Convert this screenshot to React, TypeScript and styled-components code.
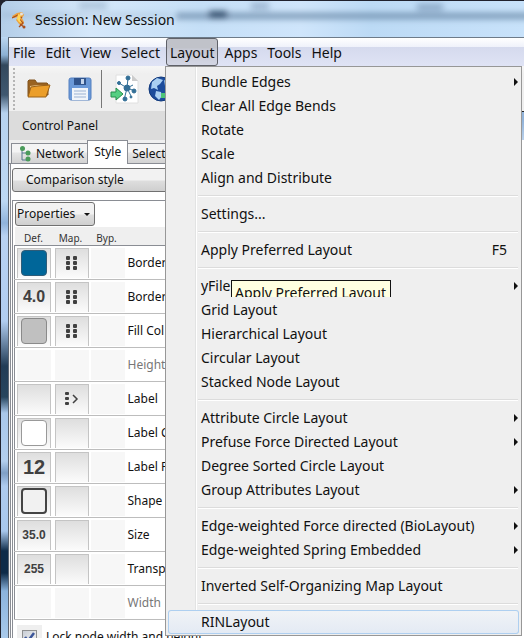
import React from "react";
import styled, { createGlobalStyle, css } from "styled-components";

const Global = createGlobalStyle`
  * { box-sizing: border-box; }
  html, body { margin: 0; padding: 0; overflow: hidden; background: #23242e; }
  body, button, input { font-family: "Noto Sans", "Open Sans", sans-serif; color: #111; }
  button { margin: 0; padding: 0; border: 0; background: none; white-space: nowrap; }
`;

const Frame = styled.div`
  height: 100vh;
  display: flex;
  flex-direction: column;
  overflow: hidden;
  padding-left: 7px;
  border-top: 1px solid #20222e;
  border-left: 1px solid #20222e;
  border-top-left-radius: 8px;
  background:
    linear-gradient(#c8e0f700 0 37px, #b9d4ee 37px, #8cb0d4 54px, #33485d 64px, #405870 94px, #b7d2ef 112px, #bdd8f3 200px, #90b3db 222px, #b9d2f2 235px, #b1cdf0 320px, #223c56 365px, #27455e 396px, #a9c7ea 412px, #b3cfee 460px, #7f9fc5 472px, #aecbee 485px, #a8c7ec 530px, #0f2b48 550px, #0f2b48 572px, #8bb3dc 590px, #a9caeb 638px) left / 7px 100% no-repeat,
    #bad7f3;
`;

const TitleBar = styled.header`
  position: relative;
  flex: 0 0 36px;
  display: flex;
  align-items: center;
  gap: 9px;
  margin-left: -7px;
  padding: 2px 0 0 11px;
  background: linear-gradient(90deg, #b4cee8 0, #d5e8fa 90px, #c5dff7 200px, #cfe5fb 300px, #bcdaf5 370px, #c8e2fa 100%);
`;

const TitleBlur = styled.svg`
  position: absolute;
  inset: 0;
  width: 100%;
  height: 100%;
`;

const Title = styled.h1`
  position: relative;
  margin: 0;
  font-size: 14px;
  line-height: 20px;
  font-weight: 400;
`;

const AppIcon = styled.svg`
  position: relative;
`;

const Client = styled.main`
  flex: 1;
  min-height: 0;
  display: flex;
  flex-direction: column;
  border-left: 1px solid #59626f;
  border-top: 1px solid #6d7b89;
  background: #efefef;
`;

const MenuBar = styled.nav`
  flex: 0 0 28px;
  display: flex;
  align-items: flex-start;
  gap: 2px;
  background: linear-gradient(#ffffff 0, #eff2fa 9px, #d5daed 9px, #dfe3f5 100%);
`;

const MenuSlot = styled.div`
  position: relative;
`;

const MenuTitle = styled.button<{ $open?: boolean }>`
  height: 28px;
  padding: 2px 3px 0;
  font-size: 14px;
  line-height: 24px;
  border: 1px solid transparent;
  border-radius: 3px;
  ${(p) =>
    p.$open &&
    css`
      border-color: #5f6168;
      background: linear-gradient(#c0c2c9 0 9px, #c6c8d3 10px, #d3d6e4);
    `}
`;

const Popup = styled.div`
  position: absolute;
  z-index: 5;
  top: 28px;
  left: -1px;
  min-width: 357px;
  padding: 3px 2px 1px;
  border: 1px solid #979797;
  background: linear-gradient(90deg, transparent 29px, #e2e3e3 29px 30px, #fff 30px 31px, transparent 31px), #efefef;
`;

const Item = styled.div<{ $active?: boolean }>`
  position: relative;
  height: 24px;
  border-radius: 3px;
  ${(p) =>
    p.$active &&
    css`
      box-shadow: inset 0 0 0 1px #aecff0;
      background: linear-gradient(#f1f3f6, #e3eaf4);
    `}
`;

const ItemButton = styled.button`
  width: 100%;
  height: 24px;
  display: flex;
  align-items: center;
  justify-content: space-between;
  padding: 0 1px 0 33px;
  font-size: 14px;
  line-height: 24px;
  text-align: left;
`;

const Shortcut = styled.span`
  padding-right: 11px;
`;

const Separator = styled.hr`
  height: 12px;
  margin: 0 1px 0 30px;
  border: 0;
  background: linear-gradient(transparent 5px, #dcdcdc 5px 6px, #fff 6px 7px, transparent 7px);
`;

const Tip = styled.div`
  position: absolute;
  top: 6px;
  left: 63px;
  width: 160px;
  height: 17px;
  overflow: hidden;
  padding-left: 3px;
  border: 1px solid #111;
  border-bottom: 0;
  background: #ffffe1;
  font-size: 14px;
  line-height: 24px;
  white-space: nowrap;
`;

const ToolBar = styled.div`
  flex: 0 0 45px;
  display: flex;
  align-items: center;
  padding-left: 4px;
  background: linear-gradient(#f6f6f6, #efefef 8px);
`;

const Grip = styled.span`
  width: 2px;
  height: 42px;
  margin-right: 12px;
  background: repeating-linear-gradient(#b5b5b5 0 2px, transparent 2px 4px);
`;

const ToolButton = styled.button<{ $gap: number }>`
  display: flex;
  margin-right: ${(p) => p.$gap}px;
`;

const ToolRule = styled.span`
  width: 1px;
  height: 38px;
  margin-right: 8px;
  background: #777;
`;

const Body = styled.div`
  flex: 1;
  min-height: 0;
  display: grid;
  grid-template-columns: minmax(0, 1fr) 2px;
`;

const Panel = styled.section`
  min-width: 0;
  display: flex;
  flex-direction: column;
  background: #efefef;
`;

const PanelTitle = styled.h2`
  flex: 0 0 29px;
  margin: 0;
  padding-left: 13px;
  background: #dcdcdc;
  font-size: 12px;
  line-height: 29px;
  font-weight: 400;
`;

const Tabs = styled.div`
  flex: 0 0 24px;
  display: flex;
  align-items: flex-end;
  padding-left: 2px;
  background: linear-gradient(transparent 23px, #8a8d94 23px);
`;

const Tab = styled.button<{ $selected?: boolean }>`
  height: 21px;
  display: flex;
  align-items: center;
  gap: 5px;
  padding: 0 3px 0 8px;
  border: 1px solid #8a8d94;
  border-right: 0;
  background: linear-gradient(#f4f4f4 0 8px, #e5e5e5 9px, #d2d2d2);
  font-size: 12px;
  line-height: 18px;
  ${(p) =>
    p.$selected &&
    css`
      height: 24px;
      padding: 0 6px 2px 6px;
      border-right: 1px solid #8a8d94;
      border-bottom: 0;
      background: #fff;
    `}
  &:last-child { padding-left: 4px; border-left: 0; }
`;

const TabPage = styled.div`
  flex: 1;
  min-height: 0;
  display: flex;
  flex-direction: column;
  margin-left: 1px;
  padding: 4px 0 0 1px;
  border-left: 1px solid #8a8d94;
  background: #fff;
`;

const StylePicker = styled.button`
  flex: 0 0 24px;
  padding-left: 13px;
  border: 1px solid #707070;
  border-radius: 3px;
  background: linear-gradient(#f2f2f2 0 11px, #dedede 12px, #cfcfcf);
  font-size: 12px;
  line-height: 20px;
  text-align: left;
`;

const Properties = styled.div`
  flex: 1;
  min-height: 0;
  display: flex;
  flex-direction: column;
  margin-top: 8px;
  padding-left: 1px;
  border-top: 1px solid #8a8d94;
  border-left: 1px solid #8a8d94;
`;

const PropertiesBar = styled.div`
  flex: 0 0 26px;
  padding: 1px 0 0 1px;
`;

const PropertiesButton = styled.button`
  height: 24px;
  display: flex;
  align-items: center;
  gap: 9px;
  padding: 0 4px 0 1px;
  border: 1px solid #707070;
  border-radius: 3px;
  background: linear-gradient(#f2f2f2 0 11px, #dedede 12px, #cfcfcf);
  font-size: 12px;
  line-height: 20px;
`;

const Table = styled.table`
  width: 100%;
  table-layout: fixed;
  border-collapse: collapse;
  border-spacing: 0;
`;

const Head = styled.th`
  height: 18px;
  padding: 5px 0 0;
  background: #efefef;
  border-bottom: 1px solid #8a8d94;
  font-size: 10px;
  line-height: 12px;
  font-weight: 400;
  text-align: center;
  color: #333;
`;

const Row = styled.tr`
  height: 34px;
  border-bottom: 1px solid #bdbdbd;
  border-left: 1px solid #8a8d94;
`;

const Cell = styled.td`
  padding: 2px 0 1px 2px;
`;

const CellButton = styled.button<{ $flat?: boolean; $size?: number }>`
  width: 34px;
  height: 30px;
  display: flex;
  align-items: center;
  justify-content: center;
  border: 1px solid #c4c4c4;
  border-bottom: 0;
  background: linear-gradient(#dedede, #fbfbfb);
  font-family: "Liberation Sans", Arial, sans-serif;
  font-size: ${(p) => p.$size ?? 16}px;
  line-height: 20px;
  font-weight: 700;
  color: #404040;
  ${(p) =>
    p.$flat &&
    css`
      border: 0;
      background: #f7f7f7;
    `}
`;

const Label = styled.td<{ $dim?: boolean }>`
  padding: 2px 0 0 3px;
  font-size: 12px;
  line-height: 18px;
  white-space: nowrap;
  color: ${(p) => (p.$dim ? "#777" : "#111")};
`;

const Swatch = styled.span<{ $fill: string; $line: string; $thick?: boolean }>`
  width: 26px;
  height: 26px;
  border: ${(p) => (p.$thick ? 2 : 1)}px solid ${(p) => p.$line};
  border-radius: 4px;
  background: ${(p) => p.$fill};
`;

const LockRow = styled.label`
  flex: 0 0 34px;
  display: flex;
  align-items: flex-start;
  gap: 4px;
  padding: 5px 0 0 3px;
  font-size: 12px;
  line-height: 24px;
  white-space: nowrap;
`;

const LockBox = styled.span`
  display: grid;
  place-items: center;
  width: 25px;
  height: 25px;
  background: #efefef;
`;

const Check = styled.input`
  appearance: none;
  width: 15px;
  height: 15px;
  margin: 0;
  border: 1px solid #8e8f8f;
  background: linear-gradient(135deg, #c9ced5, #f6f6f6);
  grid-area: 1 / 1;
`;

const Tick = styled.svg`
  grid-area: 1 / 1;
  pointer-events: none;
`;

const Edge = styled.div`
  background: linear-gradient(#222 0 1px, #91b3da 1px 10px, #bad1eb 29px, #fff 29px);
`;

const Dots = () => (
  <svg width="12" height="14" viewBox="0 0 12 14" fill="#404040">
    {[0, 5, 10].map((y) => (
      <g key={y}>
        <rect x="0" y={y} width="4" height="4" rx="1" />
        <rect x="7" y={y} width="4" height="4" rx="1" />
      </g>
    ))}
  </svg>
);

const DotsArrow = () => (
  <svg width="14" height="14" viewBox="0 0 14 14" fill="#404040">
    {[0, 5, 10].map((y) => (
      <rect key={y} x="0" y={y} width="4" height="3" rx="1" />
    ))}
    <path d="M8 3l4 4-4 4" fill="none" stroke="#404040" strokeWidth="1.5" />
  </svg>
);

const Arrow = () => (
  <svg width="4" height="8" viewBox="0 0 4 8" aria-hidden="true">
    <path d="M0 0L4 4L0 8Z" fill="#111" />
  </svg>
);

type Entry = { text: string; arrow?: boolean; key?: string; active?: boolean; tip?: string };

const groups: Entry[][] = [
  [
    { text: "Bundle Edges", arrow: true },
    { text: "Clear All Edge Bends" },
    { text: "Rotate" },
    { text: "Scale" },
    { text: "Align and Distribute" },
  ],
  [{ text: "Settings..." }],
  [{ text: "Apply Preferred Layout", key: "F5" }],
  [
    { text: "yFile", arrow: true, tip: "Apply Preferred Layout" },
    { text: "Grid Layout" },
    { text: "Hierarchical Layout" },
    { text: "Circular Layout" },
    { text: "Stacked Node Layout" },
  ],
  [
    { text: "Attribute Circle Layout", arrow: true },
    { text: "Prefuse Force Directed Layout", arrow: true },
    { text: "Degree Sorted Circle Layout" },
    { text: "Group Attributes Layout", arrow: true },
  ],
  [
    { text: "Edge-weighted Force directed (BioLayout)", arrow: true },
    { text: "Edge-weighted Spring Embedded", arrow: true },
  ],
  [{ text: "Inverted Self-Organizing Map Layout" }],
  [{ text: "RINLayout", active: true }],
];

const LayoutMenu = () => (
  <Popup role="menu">
    {groups.map((group, g) => (
      <React.Fragment key={g}>
        {g > 0 && <Separator />}
        {group.map((e) => (
          <Item key={e.text} $active={e.active}>
            <ItemButton role="menuitem">
              <span>{e.text}</span>
              {e.key && <Shortcut>{e.key}</Shortcut>}
              {e.arrow && <Arrow />}
            </ItemButton>
            {e.tip && <Tip role="tooltip">{e.tip}</Tip>}
          </Item>
        ))}
      </React.Fragment>
    ))}
  </Popup>
);

type Prop = {
  label: string;
  def?: React.ReactNode;
  map?: React.ReactNode;
  size?: number;
  dim?: boolean;
};

const props: Prop[] = [
  { label: "Border", def: <Swatch $fill="#006699" $line="#2f5c78" />, map: <Dots /> },
  { label: "Border", def: "4.0", map: <Dots /> },
  { label: "Fill Col", def: <Swatch $fill="#c0c0c0" $line="#8a8a8a" />, map: <Dots /> },
  { label: "Height", dim: true },
  { label: "Label", map: <DotsArrow /> },
  { label: "Label C", def: <Swatch $fill="#fff" $line="#999" /> },
  { label: "Label F", def: "12", size: 20 },
  { label: "Shape", def: <Swatch $fill="#f1f1f1" $line="#444" $thick /> },
  { label: "Size", def: "35.0", size: 12 },
  { label: "Transp", def: "255", size: 12 },
  { label: "Width", dim: true },
];

export default function App() {
  return (
    <>
      <Global />
      <Frame>
        <TitleBar>
          <TitleBlur aria-hidden="true">
            <defs>
              <filter id="soft" x="-20%" y="-100%" width="140%" height="300%">
                <feGaussianBlur stdDeviation="3" />
              </filter>
            </defs>
            <g filter="url(#soft)" fill="#5f7e9e">
              <rect x="175" y="12" width="400" height="6" opacity=".75" />
              <rect x="78" y="1" width="28" height="7" opacity=".35" />
              <rect x="208" y="10" width="18" height="7" fill="#2d4a68" />
              <rect x="250" y="2" width="18" height="6" opacity=".5" />
              <rect x="416" y="3" width="26" height="6" opacity=".6" />
              <rect x="0" y="12" width="170" height="4" opacity=".25" />
            </g>
          </TitleBlur>
          <AppIcon width="14" height="17" viewBox="0 0 14 17">
            <path d="M5 1l5-1 2 3-2 3 2 4-1 3-4-1-3-4 2-3-4 1-2-2z" fill="#efa23c" />
            <path d="M0 6l6-3 4 3M7 7l4 4-4 4M8 12l4 3" fill="none" stroke="#a9501f" strokeWidth="1.3" />
            <path d="M6 2l3 1-1 5 2 3-3-1-2-3z" fill="#ffd85a" />
            <circle cx="9.5" cy="2" r="1.5" fill="#e7e2dd" />
            <circle cx="12" cy="15" r="1.5" fill="#a9501f" />
          </AppIcon>
          <Title>Session: New Session</Title>
        </TitleBar>
        <Client>
          <MenuBar>
            {["File", "Edit", "View", "Select", "Layout", "Apps", "Tools", "Help"].map((m) => (
              <MenuSlot key={m}>
                <MenuTitle $open={m === "Layout"}>{m}</MenuTitle>
                {m === "Layout" && <LayoutMenu />}
              </MenuSlot>
            ))}
          </MenuBar>
          <ToolBar>
            <Grip />
            <ToolButton $gap={17} aria-label="Open session">
              <svg width="24" height="20" viewBox="0 0 24 20">
                <path d="M1 17V2l1-1h6l2 3h10l1 1v11z" fill="#9a6320" stroke="#80531d" />
                <path d="M3 17V7l7-1 10 1v3z" fill="#e8c387" />
                <path d="M1 18L4 8l7-1 12-1-4 12z" fill="#eb9e2a" stroke="#9b6219" />
              </svg>
            </ToolButton>
            <ToolButton $gap={9} aria-label="Save session">
              <svg width="24" height="24" viewBox="0 0 24 24">
                <rect x="1" y="1" width="22" height="22" rx="2" fill="#6b99d8" stroke="#5580c0" />
                <rect x="6" y="1" width="12" height="7" fill="#31548c" />
                <rect x="13" y="2" width="3" height="5" fill="#c4d5ec" />
                <rect x="4" y="11" width="16" height="12" fill="#f0f4fa" />
                <path d="M6 14h12M6 17h12M6 20h12" stroke="#9bb2d3" />
              </svg>
            </ToolButton>
            <ToolRule />
            <ToolButton $gap={9} aria-label="Import network">
              <svg width="29" height="30" viewBox="0 0 29 30">
                <path d="M6 1h16l6 6v22H6z" fill="#fff" stroke="#e0e0e0" />
                <path d="M22 1v6h6z" fill="#ccc" />
                <g stroke="#336f97" strokeWidth="1" fill="#336f97">
                  <path d="M17 14L18 4M17 14L9 9M17 14L25 17M17 14L21 22M17 14L14 26M17 14L23 11" />
                  <circle cx="17" cy="14" r="3" />
                  <circle cx="18" cy="4" r="2" />
                  <circle cx="9" cy="9" r="1.5" />
                  <circle cx="24" cy="17" r="2" />
                  <circle cx="21" cy="23" r="1" />
                  <circle cx="15" cy="25" r="2" />
                </g>
                <path d="M1 18h5v-4l7 6-7 6v-3H1z" fill="#55cf82" stroke="#278f4c" />
              </svg>
            </ToolButton>
            <ToolButton $gap={8} aria-label="Import from web">
              <svg width="26" height="26" viewBox="0 0 26 26">
                <circle cx="13" cy="13" r="12" fill="#1c4c9c" stroke="#123a7c" />
                <path d="M4 6l5-4 6 2-3 4-3 2 1 4-4-2-3 1zM8 15l5 1 1 4-3 4-4-4zM16 4l5 3 1 5-5-2z" fill="#a9cff2" />
                <path d="M13 17h5v-3l7 6-7 5v-3h-5z" fill="#4cc578" />
              </svg>
            </ToolButton>
          </ToolBar>
          <Body>
            <Panel>
              <PanelTitle>Control Panel</PanelTitle>
              <Tabs>
                <Tab>
                  <svg width="11" height="16" viewBox="0 0 11 16">
                    <path d="M2 2v12h6M2 7h6" fill="none" stroke="#55758c" />
                    <circle cx="2.5" cy="2.5" r="2.5" fill="#4b9b5b" />
                    <circle cx="8" cy="7" r="2.5" fill="#4b9b5b" />
                    <circle cx="8" cy="13" r="2.5" fill="#4b9b5b" />
                  </svg>
                  Network
                </Tab>
                <Tab $selected>Style</Tab>
                <Tab>Select</Tab>
              </Tabs>
              <TabPage>
                <StylePicker>Comparison style</StylePicker>
                <Properties>
                  <PropertiesBar>
                    <PropertiesButton>
                      Properties
                      <svg width="6" height="3" viewBox="0 0 6 3">
                        <path d="M0 0h6L3 3z" fill="#111" />
                      </svg>
                    </PropertiesButton>
                  </PropertiesBar>
                  <Table>
                    <colgroup>
                      <col width="38" />
                      <col width="36" />
                      <col width="36" />
                      <col />
                    </colgroup>
                    <thead>
                      <tr>
                        <Head>Def.</Head>
                        <Head>Map.</Head>
                        <Head>Byp.</Head>
                        <Head />
                      </tr>
                    </thead>
                    <tbody>
                      {props.map((p, i) => (
                        <Row key={i}>
                          <Cell>
                            <CellButton $flat={p.dim} $size={p.size}>{p.def}</CellButton>
                          </Cell>
                          <Cell>
                            <CellButton $flat={p.dim}>{p.map}</CellButton>
                          </Cell>
                          <Cell>
                            <CellButton $flat />
                          </Cell>
                          <Label $dim={p.dim}>{p.label}</Label>
                        </Row>
                      ))}
                    </tbody>
                  </Table>
                  <LockRow>
                    <LockBox>
                      <Check type="checkbox" defaultChecked />
                      <Tick width="11" height="11" viewBox="0 0 11 11">
                        <path d="M1 5l3 4 6-8" fill="none" stroke="#3b5599" strokeWidth="2.5" />
                      </Tick>
                    </LockBox>
                    Lock node width and height
                  </LockRow>
                </Properties>
              </TabPage>
            </Panel>
            <Edge />
          </Body>
        </Client>
      </Frame>
    </>
  );
}
